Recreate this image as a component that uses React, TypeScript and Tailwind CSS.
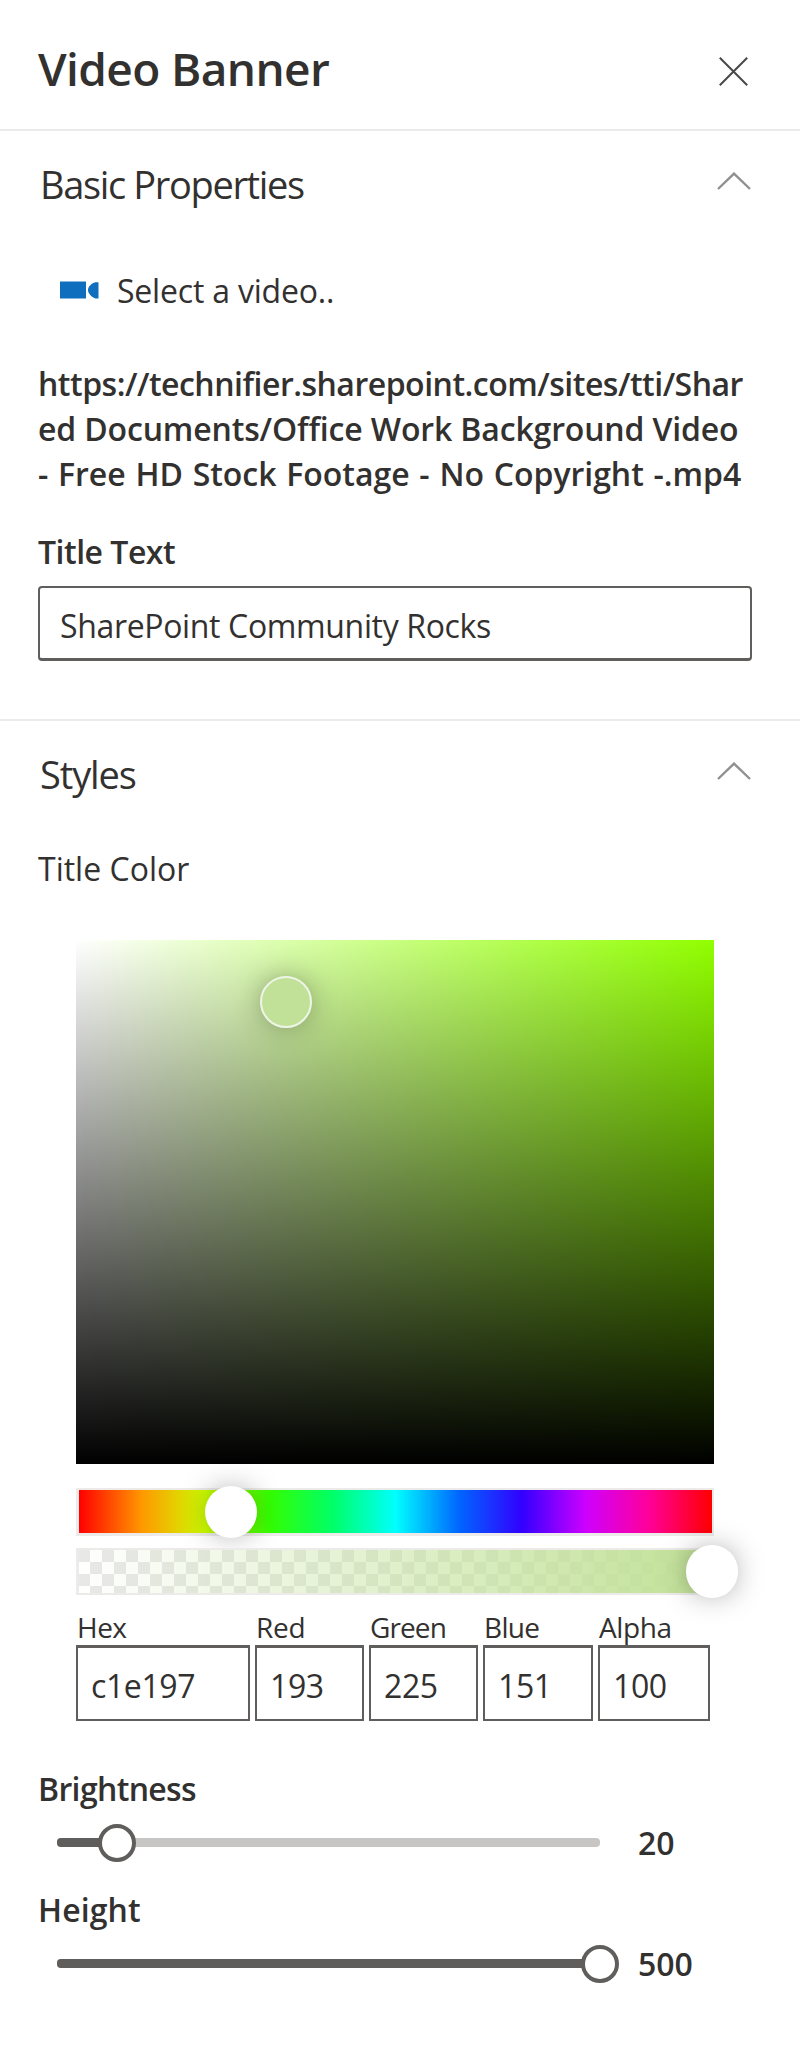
import type { ReactNode } from "react";

function Chevron() {
  return (
    <svg className="mb-[6px] block" width="34" height="18" viewBox="0 0 34 18" fill="none">
      <path d="M1 17 L17 1.6 L33 17" stroke="#92908e" strokeWidth="2.4" />
    </svg>
  );
}

function SectionHeading({ children, spacing }: { children: ReactNode; spacing: string }) {
  return (
    <div className="flex h-[105px] items-center justify-between pr-[49px] pl-[40px]">
      <h2 className={`text-[38px] leading-[50px] ${spacing}`}>{children}</h2>
      <Chevron />
    </div>
  );
}

type FieldProps = {
  label: string;
  value: string;
  box: string;
  labelSpacing?: string;
};

function ChannelField({ label, value, box, labelSpacing = "" }: FieldProps) {
  return (
    <label className={`flex shrink-0 flex-col ${box}`}>
      <span className={`h-9 pl-px text-[28px] leading-9 whitespace-nowrap ${labelSpacing}`}>{label}</span>
      <span className="flex h-[76px] items-center border-2 border-t-3 border-[#605e5c] pt-[5px] pl-[13px] text-[32px] leading-10 tracking-[-0.4px]">
        {value}
      </span>
    </label>
  );
}

type SliderProps = {
  label: string;
  labelSpacing: string;
  value: number;
  fill: string;
  thumb: string;
};

function Slider({ label, labelSpacing, value, fill, thumb }: SliderProps) {
  return (
    <div>
      <div className={`h-10 pt-px text-[32px] leading-10 font-semibold ${labelSpacing}`}>{label}</div>
      <div className="mt-[13px] flex h-11 items-center pl-[19px]">
        <div className="relative mb-[2px] h-[9px] w-[543px] rounded-[4px] bg-[#c8c6c4]">
          <div className={`h-full rounded-[4px] bg-[#605e5c] ${fill}`} />
          <div
            className={`absolute top-[-14px] h-[38px] w-[38px] rounded-full border-4 border-[#605e5c] bg-white ${thumb}`}
          />
        </div>
        <span className="ml-[38px] text-[32px] leading-10 font-semibold">{value}</span>
      </div>
    </div>
  );
}

export default function App() {
  return (
    <main className="h-[2057px] w-[800px] overflow-hidden bg-white font-['Open_Sans',sans-serif] font-normal text-[#323130]">
      <header className="flex h-[131px] items-center justify-between border-b-2 border-[#edebe9] pt-[14px] pr-[52px] pl-[38px]">
        <h1 className="mb-[7px] text-[46px] leading-[60px] font-semibold tracking-[-0.6px]">Video Banner</h1>
        <svg className="block" width="29" height="29" viewBox="0 0 29 29" fill="none">
          <path d="M0.8 0.8 L28.2 28.2 M28.2 0.8 L0.8 28.2" stroke="#4a4847" strokeWidth="2" />
        </svg>
      </header>

      <section className="h-[588px]">
        <SectionHeading spacing="tracking-[-1.35px]">Basic Properties</SectionHeading>
        <div className="mt-[34px] flex h-10 items-center pl-[60px]">
          <svg className="block" width="39" height="18" viewBox="0 0 39 18">
            <path d="M0 0.5H26V17.5H0Z M28 9C28 6 31 2.5 35.5 1.2H38.5V17.5H35.5C31 16 28 12 28 9Z" fill="#106ebe" />
          </svg>
          <span className="mt-[2px] ml-[18px] text-[32px] leading-10 tracking-[-0.2px]">Select a video..</span>
        </div>
        <div className="mt-[51px] pl-[38px] text-[32px] leading-[45px] font-semibold whitespace-nowrap">
          <div className="tracking-[-0.5px]">https://technifier.sharepoint.com/sites/tti/Shar</div>
          <div className="tracking-[-0.15px]">ed Documents/Office Work Background Video</div>
          <div className="[word-spacing:1.5px] tracking-[-0.03px]">- Free HD Stock Footage - No Copyright -.mp4</div>
        </div>
        <div className="mt-[36px] h-10 pl-[38px] text-[32px] leading-10 font-semibold tracking-[-0.5px]">Title Text</div>
        <div className="mt-[14px] ml-[38px] flex h-[75px] w-[714px] items-center rounded-[4px] border-2 border-b-3 border-[#605e5c] pt-[6px] pl-5 text-[32px] leading-10 tracking-[-0.35px]">
          SharePoint Community Rocks
        </div>
      </section>

      <section className="border-t-2 border-[#edebe9]">
        <SectionHeading spacing="tracking-[-1.1px]">Styles</SectionHeading>
        <div className="mt-[23px] h-10 pl-[38px] text-[32px] leading-10">Title Color</div>

        <div className="mt-[51px] ml-[76px] w-[638px]">
          <div className="relative h-[524px] bg-[#91ff00]">
            <div className="h-full bg-[linear-gradient(to_right,white,rgba(255,255,255,0))]">
              <div className="h-full bg-[linear-gradient(to_top,black,rgba(0,0,0,0))]" />
            </div>
            <div className="absolute top-[36px] left-[184px] h-[52px] w-[52px] rounded-full border-2 border-[#edf5e6] bg-[#c2e198] shadow-[0_0_35px_-12px_#000]" />
          </div>

          <div className="relative mt-6 h-12 border-2 border-b-3 border-l-3 border-[#edebe9] bg-[linear-gradient(to_left,red_0,#f09_10%,#cd00ff_20%,#3200ff_30%,#06f_40%,#00fffd_50%,#0f6_60%,#35ff00_70%,#cdff00_80%,#f90_90%,red_100%)] bg-origin-padding">
            <div className="absolute top-[-4px] left-[126px] h-[52px] w-[52px] rounded-full bg-white shadow-[0_0_35px_-12px_#000]" />
          </div>

          <div className="relative mt-3 h-[47px] border-2 border-l-3 border-[#edebe9]">
            <div className="h-full bg-[repeating-conic-gradient(white_0_25%,#e8e8e8_0_50%)] bg-[position:-1px_0] bg-size-[24px_24px]">
              <div className="h-full bg-[linear-gradient(to_right,rgba(193,225,151,0),#c1e197)]" />
            </div>
            <div className="absolute top-[-5px] left-[607px] h-[53px] w-[52px] rounded-full bg-white shadow-[0_0_35px_-12px_#000]" />
          </div>

          <div className="mt-[14px] flex gap-[5px]">
            <ChannelField label="Hex" value="c1e197" box="w-[174px]" labelSpacing="tracking-[-0.5px]" />
            <ChannelField label="Red" value="193" box="w-[109px]" labelSpacing="tracking-[-0.2px]" />
            <ChannelField label="Green" value="225" box="w-[109px]" labelSpacing="tracking-[-0.9px]" />
            <ChannelField label="Blue" value="151" box="w-[110px]" labelSpacing="tracking-[-0.7px]" />
            <ChannelField label="Alpha" value="100" box="w-[112px]" labelSpacing="tracking-[-0.4px]" />
          </div>
        </div>

        <div className="mt-[47px] flex flex-col gap-6 pl-[38px]">
          <Slider label="Brightness" labelSpacing="tracking-[-0.65px]" value={20} fill="w-[60px]" thumb="left-[41px]" />
          <Slider label="Height" labelSpacing="tracking-[0.1px]" value={500} fill="w-full" thumb="left-[524px]" />
        </div>
      </section>
    </main>
  );
}
